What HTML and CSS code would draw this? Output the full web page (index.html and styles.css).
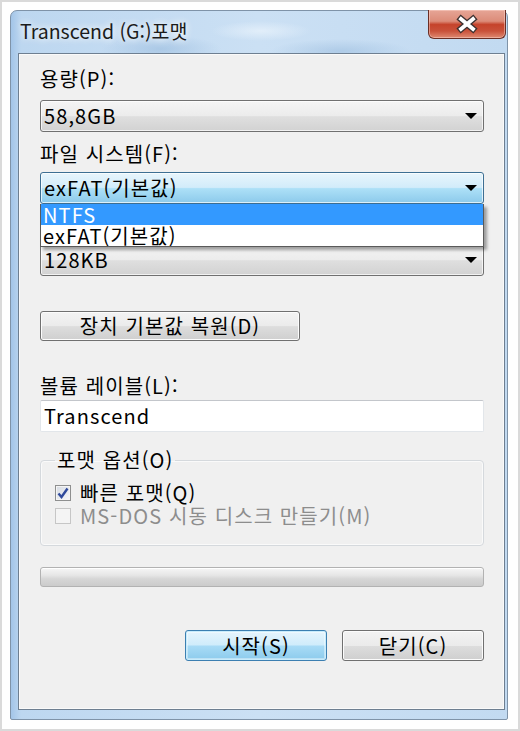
FILE: index.html
```html
<!DOCTYPE html>
<html lang="ko">
<head>
	<meta charset="UTF-8">
	<title>Transcend (G:)포맷</title>
	<link rel="stylesheet" href="styles.css">
</head>
<body>
	<div class="shot">
		<div class="win">
			<div class="titlebar">
				<span class="title">Transcend (G:)포맷</span>
				<a href="javascript:;" class="close">
					<svg width="26" height="20" viewBox="0 0 26 20">
						<path d="M7 5 L19 15 M19 5 L7 15" stroke="#3b3030" stroke-width="6.5" stroke-linecap="square"/>
						<path d="M7 5 L19 15 M19 5 L7 15" stroke="#fff" stroke-width="3.8" stroke-linecap="square"/>
					</svg>
				</a>
			</div>
			<div class="client">
				<div class="lbl lbl-first">용량(P):</div>
				<div class="combo"><span>58,8GB</span><i class="arrow"></i></div>

				<div class="lbl">파일 시스템(F):</div>
				<div class="combo-wrap">
					<div class="combo open"><span>exFAT(기본값)</span><i class="arrow"></i></div>
					<ul class="droplist">
						<li class="on">NTFS</li>
						<li>exFAT(기본값)</li>
					</ul>
				</div>

				<div class="combo combo-unit"><span>128KB</span><i class="arrow"></i></div>

				<a href="javascript:;" class="btn btn-restore">장치 기본값 복원(D)</a>

				<div class="lbl lbl-vol">볼륨 레이블(L):</div>
				<div class="textbox">Transcend</div>

				<fieldset class="group">
					<legend>포맷 옵션(O)</legend>
					<label class="chk">
						<span class="box checked">
							<svg width="12" height="12" viewBox="0 0 12 12"><path d="M1.5 6.5 L4.5 10 L10.5 1.5" fill="none" stroke="#2f4a9c" stroke-width="2.4"/></svg>
						</span>빠른 포맷(Q)
					</label>
					<label class="chk disabled"><span class="box"></span>MS-DOS 시동 디스크 만들기(M)</label>
				</fieldset>

				<div class="progress"></div>

				<div class="buttons">
					<a href="javascript:;" class="btn btn-default">시작(S)</a>
					<a href="javascript:;" class="btn">닫기(C)</a>
				</div>
			</div>
		</div>
	</div>
</body>
</html>
```

FILE: styles.css
```css
*{margin:0; padding:0; box-sizing:border-box; list-style:none;}
body{background:#fff; font-family:"Noto Sans CJK KR", sans-serif; font-size:20px; color:#000; letter-spacing:1.1px;}
a{color:#000; text-decoration:none;}

.shot{width:520px; height:731px; border:2px solid #dadada; padding:8px 10px 0 8px; background:#fff;}

/* window frame */
.win{width:498px; height:710px; border:1px solid #7f93a8; border-radius:7px 7px 2px 2px; padding:0 2px 9px 7px;
	background:
		radial-gradient(ellipse 60px 14px at 150px 38px, rgba(150,185,220,.55), transparent),
		radial-gradient(ellipse 70px 12px at 330px 40px, rgba(150,185,220,.5), transparent),
		radial-gradient(ellipse 50px 10px at 250px 20px, rgba(235,244,252,.7), transparent),
		linear-gradient(90deg, #a3c5e8 0, #bdd7f0 10px, #cbe0f4 50%, #c2daf1 100%);
}
.titlebar{height:42px; display:flex; align-items:flex-start;}
.title{margin:8px 0 0 2px; line-height:24px; font-size:19.5px; letter-spacing:0; color:#1b1b1b; text-shadow:0 0 6px rgba(255,255,255,.9), 0 0 10px rgba(255,255,255,.7);}
.close{margin:-1px -1px 0 auto; width:78px; height:29px; display:flex; align-items:center; justify-content:center;
	border:1px solid #6a2e25; border-top:none; border-radius:0 0 6px 6px;
	background:linear-gradient(#e6a596 0, #dc8c79 40%, #c5432b 52%, #c9513a 75%, #df8a72 100%);
	box-shadow:inset 0 0 0 1px rgba(255,220,210,.45);}

/* client area */
.client{height:657px; border:1px solid #6e7f91; background:#f0f0f0; padding:14px 20px 0 21px; box-shadow:inset 0 0 0 1px #fafafa;}
.lbl{height:22px; line-height:22px; margin-top:11px; margin-bottom:7px;}
.lbl-first{margin-top:0; margin-bottom:10px;}
.lbl-vol{margin-top:34px; margin-bottom:3px;}

.combo{height:32px; border:1px solid #707070; border-radius:3px; display:flex; align-items:center; padding:0 6px 0 3px; line-height:30px;
	background:linear-gradient(#f4f4f4, #ececec 50%, #dfdfdf 52%, #d2d2d2);
	box-shadow:inset 0 0 0 1px rgba(255,255,255,.7);}
.combo span{flex:1;}
.combo.open{border-color:#3d6f93; background:linear-gradient(#e8f5fc, #d2ecfa 48%, #ade0f7 52%, #8ccaeb);}
.combo-unit{margin-top:40px;}
.arrow{width:0; height:0; border-left:6px solid transparent; border-right:6px solid transparent; border-top:6px solid #000;}

.combo-wrap{position:relative;}
.droplist{position:absolute; left:0; right:0; top:100%; z-index:2; background:#fff; border:1px solid #5a5a5a; border-top:none; box-shadow:3px 3px 3px rgba(0,0,0,.35);}
.droplist li{height:21px; line-height:21px; padding-left:2px;}
.droplist li.on{background:#3399ff; color:#fff;}

.btn{display:block; height:30px; line-height:28px; text-align:center; border:1px solid #707070; border-radius:3px;
	background:linear-gradient(#f3f3f3, #ebebeb 50%, #dddddd 52%, #cfcfcf);
	box-shadow:inset 0 0 0 1px #fcfcfc;}
.btn-restore{width:260px; margin-top:35px;}

.textbox{height:32px; line-height:30px; padding-left:3px; background:#fff; border:1px solid #e2e6ea; border-top-color:#c3c6cb; border-radius:2px;}

.group{margin-top:17px; padding:10px 14px 18px; border:1px solid #d5d9dd; border-radius:4px; min-width:0; box-shadow:inset 0 0 0 1px #fafafa;}
.group legend{padding:0 2px; line-height:22px;}
.chk{display:flex; align-items:center; height:23px; line-height:23px;}
.box{width:16px; height:16px; margin-right:9px; border:1px solid #8e8f8f; display:flex; align-items:center; justify-content:center;
	background:linear-gradient(135deg, #d6dbe3, #f6f7f9);
	box-shadow:inset 0 0 0 1px #f4f4f4;}
.chk.disabled{color:#8d8d8d;}
.chk.disabled .box{border-color:#c6c6c6; background:#f4f4f4; box-shadow:none;}

.progress{height:20px; margin-top:21px; border:1px solid #b2b2b2; border-radius:3px;
	background:linear-gradient(#f6f6f6, #e6e6e6 40%, #d6d6d6 60%, #cbcbcb);
	box-shadow:inset 0 1px 0 #fff;}

.buttons{display:flex; justify-content:flex-end; gap:15px; margin-top:43px;}
.buttons .btn{width:142px; height:31px; line-height:29px;}
.btn-default{border-color:#3c7fb1; background:linear-gradient(#e6f5fd, #d0ecfb 48%, #a8dbf6 52%, #8ccbec); box-shadow:inset 0 0 0 1px #c8ecfc, inset 0 0 0 2px rgba(255,255,255,.4);}
```
